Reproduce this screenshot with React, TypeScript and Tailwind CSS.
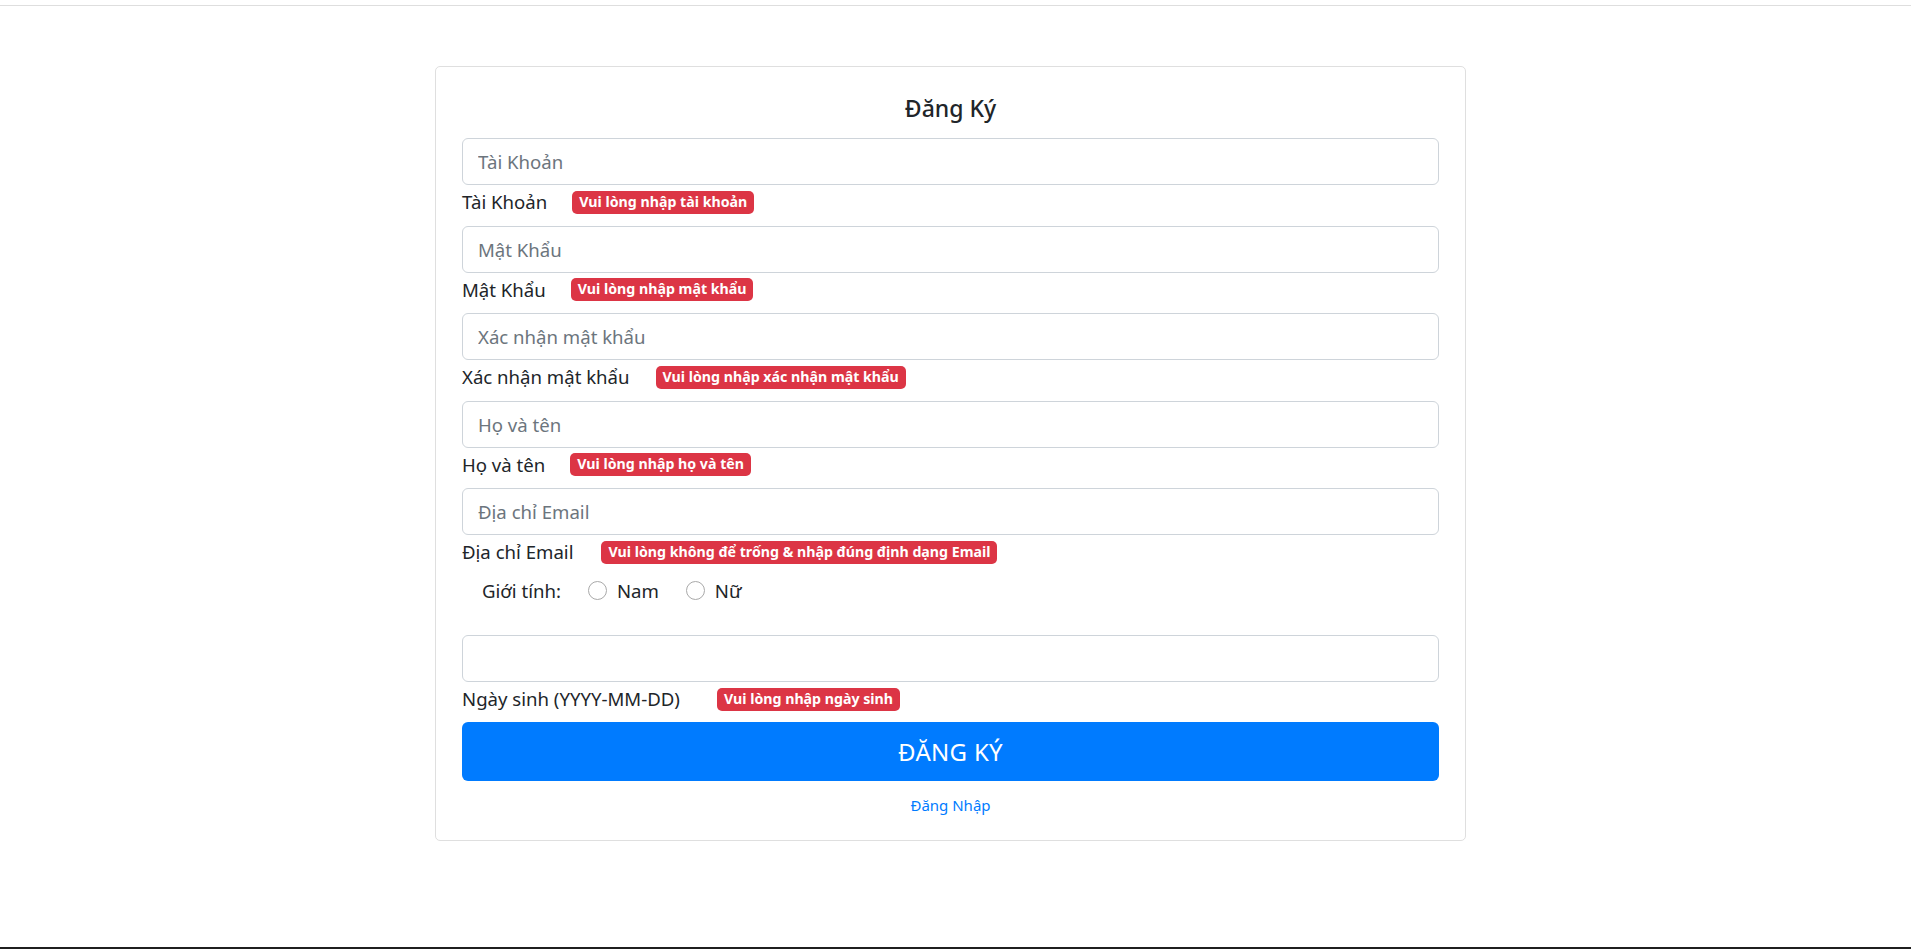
import { ReactNode } from 'react';

const FONT = { fontFamily: '"Noto Sans", "Open Sans", sans-serif' };

type Field = { placeholder: string; label: string; error: string; gap: string };

const fields: Field[] = [
  { placeholder: 'Tài Khoản', label: 'Tài Khoản', error: 'Vui lòng nhập tài khoản', gap: 'gap-[25px]' },
  { placeholder: 'Mật Khẩu', label: 'Mật Khẩu', error: 'Vui lòng nhập mật khẩu', gap: 'gap-[25px]' },
  { placeholder: 'Xác nhận mật khẩu', label: 'Xác nhận mật khẩu', error: 'Vui lòng nhập xác nhận mật khẩu', gap: 'gap-[26px]' },
  { placeholder: 'Họ và tên', label: 'Họ và tên', error: 'Vui lòng nhập họ và tên', gap: 'gap-[25px]' },
  { placeholder: 'Địa chỉ Email', label: 'Địa chỉ Email', error: 'Vui lòng không để trống & nhập đúng định dạng Email', gap: 'gap-[28px]' },
];

function Badge({ children }: { children: ReactNode }) {
  return (
    <span className="inline-flex items-center h-[23px] px-[7px] rounded-[5px] bg-[#dc3545] text-white text-[14.2px] font-bold leading-none">
      {children}
    </span>
  );
}

function TextInput({ placeholder }: { placeholder?: string }) {
  return (
    <input
      type="text"
      placeholder={placeholder}
      className="block w-full h-[47px] px-[15px] rounded-[6px] border border-[#ced4da] bg-white text-[18.6px] text-[#495057] placeholder:text-[#6c757d] outline-none"
    />
  );
}

function Radio({ label }: { label: string }) {
  return (
    <label className="flex items-center gap-[10px]">
      <span className="w-[19px] h-[19px] rounded-full border border-[#a9a9a9] bg-white" />
      <span>{label}</span>
    </label>
  );
}

export default function App() {
  return (
    <div className="h-[949px] flex flex-col bg-white text-[#212529]" style={FONT}>
      <div className="h-[6px] border-b border-[#dedede]" />

      <main className="flex-1 flex justify-center pt-[60px] pr-[10px]">
        <div className="w-[1031px] h-fit border border-[#dfdfdf] rounded-[5px] px-[26px] pt-[21px] pb-[23px]">
          <form className="flex flex-col">
            <h4 className="h-[41px] mb-[9px] flex items-center justify-center text-[23px] font-medium">Đăng Ký</h4>

            {fields.map((f) => (
              <div key={f.label}>
                <TextInput placeholder={f.placeholder} />
                <div className={`h-[34px] mb-[6.5px] flex items-center text-[18.6px] ${f.gap}`}>
                  <span>{f.label}</span>
                  <Badge>{f.error}</Badge>
                </div>
              </div>
            ))}

            <div className="h-[30px] mb-[29px] pl-[20px] flex items-center gap-[27px] text-[18.6px]">
              <span>Giới tính:</span>
              <div className="flex items-center gap-[27px]">
                <Radio label="Nam" />
                <Radio label="Nữ" />
              </div>
            </div>

            <TextInput />
            <div className="h-[35px] mb-[5.5px] flex items-center gap-[37px] text-[18.6px]">
              <span>Ngày sinh (YYYY-MM-DD)</span>
              <Badge>Vui lòng nhập ngày sinh</Badge>
            </div>

            <button
              type="button"
              className="h-[59px] rounded-[6px] bg-[#007bff] text-white text-[24px] tracking-[0.3px]"
            >
              ĐĂNG KÝ
            </button>

            <div className="mt-[12px] h-[24px] flex items-center justify-center">
              <a href="#" className="text-[15px] text-[#007bff]">Đăng Nhập</a>
            </div>
          </form>
        </div>
      </main>

      <div className="h-[2px] bg-[#1f1f1f]" />
    </div>
  );
}
